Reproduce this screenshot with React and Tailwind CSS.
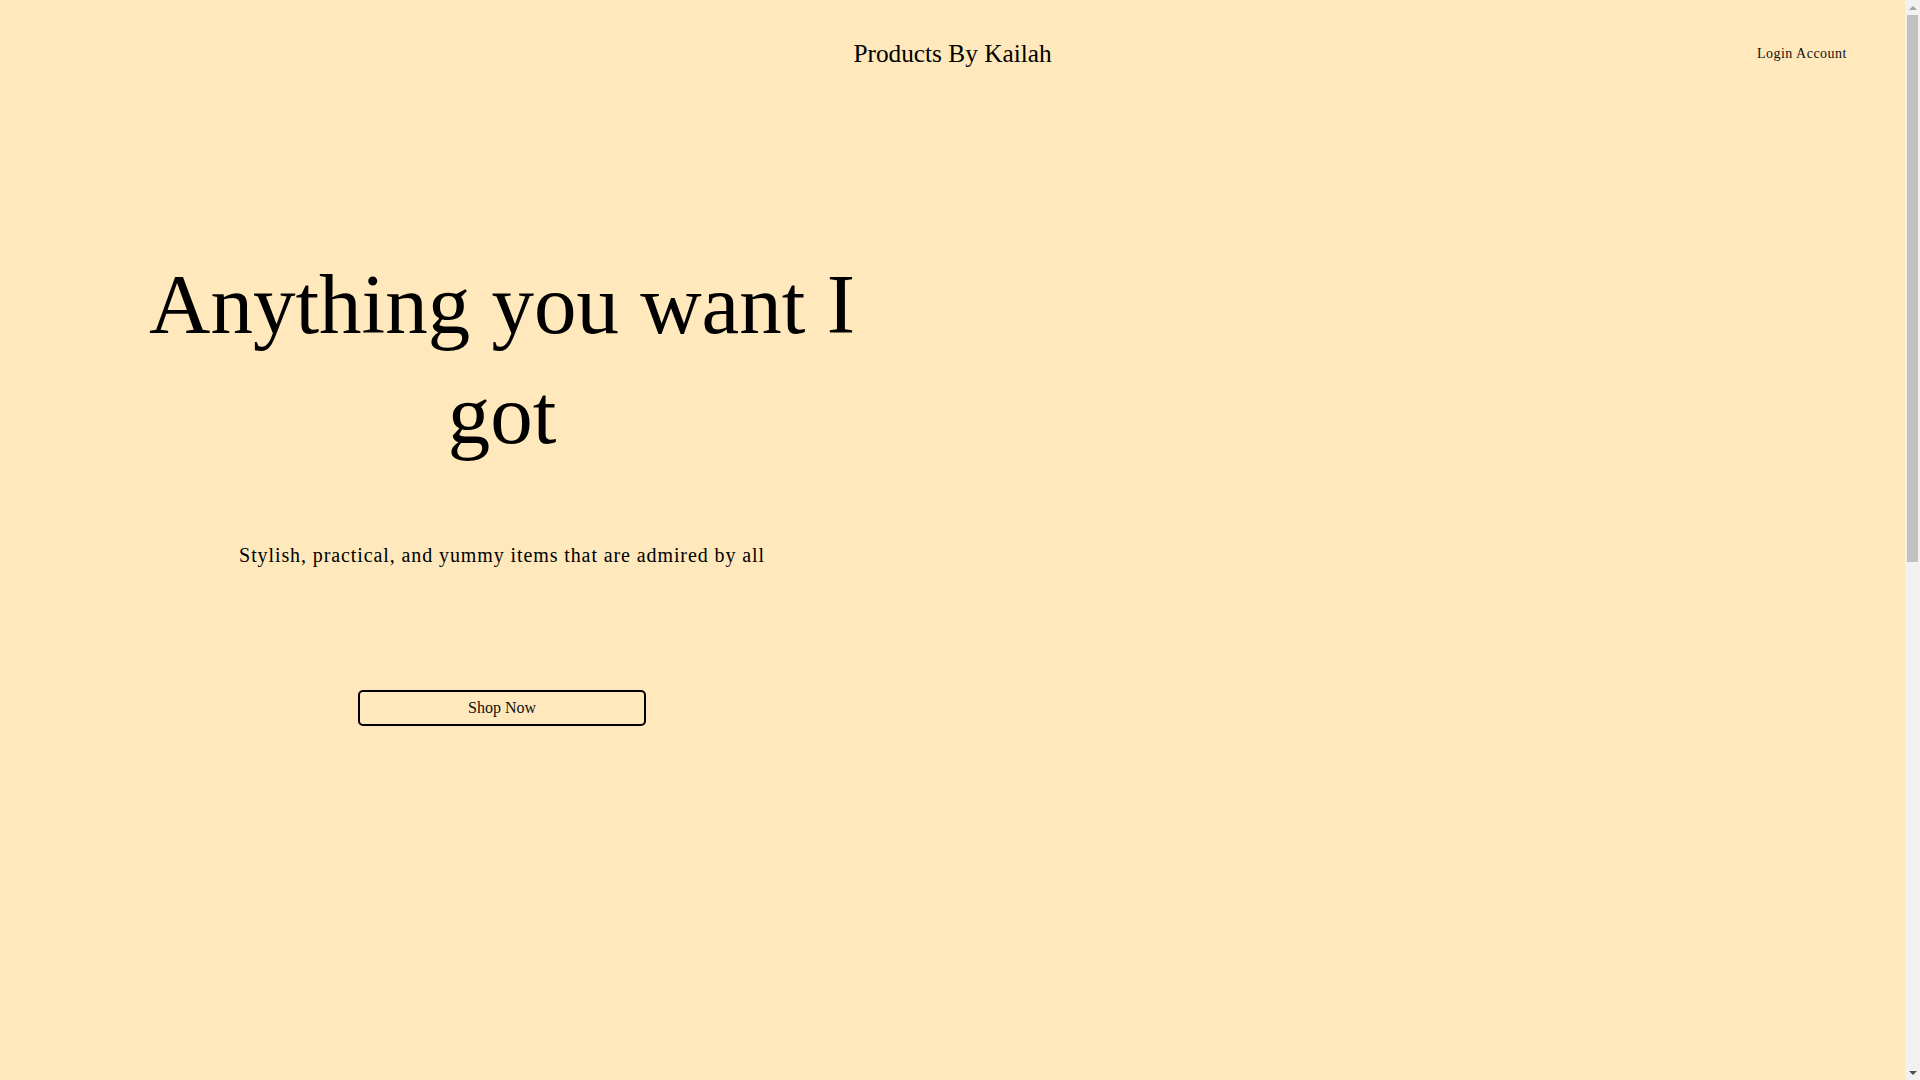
export default function App() {
  return (
    <div
      className="flex h-[1080px] overflow-hidden bg-[#ffe8bb] text-black"
      style={{ fontFamily: '"Liberation Serif", "Times New Roman", serif' }}
    >
      <div className="flex-1 min-h-[2070px]">
        <header className="grid grid-cols-3 items-center h-[107px]">
          <div />
          <div className="flex justify-center">
            <span className="text-[25.3px] leading-[1.15]">Products By Kailah</span>
          </div>
          <div className="flex justify-end pr-[58px]">
            <a className="text-[14px] tracking-[0.5px] text-[#111]" href="#">
              Login Account
            </a>
          </div>
        </header>

        <section className="flex">
          <div className="ml-[122px] w-[760px] flex flex-col items-center text-center">
            <h1 className="mt-[142px] text-[85px] leading-[110px] font-normal">
              Anything you want I got
            </h1>
            <p className="mt-[75px] text-[20px] tracking-[0.9px] leading-[1.15]">
              Stylish, practical, and yummy items that are admired by all
            </p>
            <button className="mt-[123px] w-[288px] h-[36px] border-2 border-black rounded-[5px] flex items-center justify-center text-[16px] text-[#111]">
              Shop Now
            </button>
          </div>
        </section>
      </div>

      <div className="w-[15px] h-[1080px] bg-[#f1f1f1] flex flex-col items-center">
        <div className="h-[15px] flex items-center justify-center">
          <div className="w-0 h-0 border-l-[4px] border-r-[4px] border-b-[4px] border-l-transparent border-r-transparent border-b-[#a3a3a3]" />
        </div>
        <div className="w-[11px] h-[547px] bg-[#c1c1c1]" />
        <div className="flex-1" />
        <div className="h-[15px] flex items-center justify-center">
          <div className="w-0 h-0 border-l-[4px] border-r-[4px] border-t-[4px] border-l-transparent border-r-transparent border-t-[#505050]" />
        </div>
      </div>
    </div>
  );
}
